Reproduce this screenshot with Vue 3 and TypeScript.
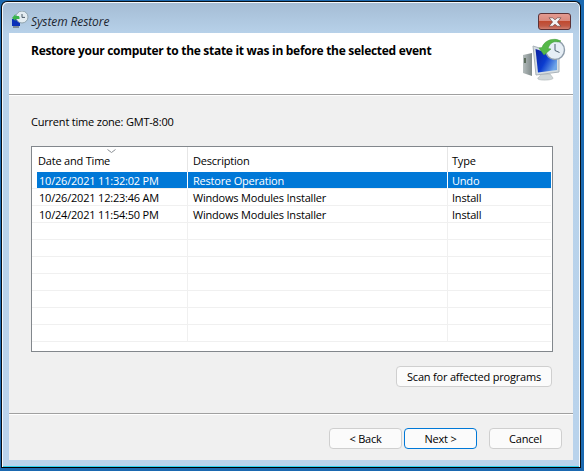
<script setup lang="ts">
const columns = ['Date and Time', 'Description', 'Type']

const restorePoints = [
  { date: '10/26/2021 11:32:02 PM', description: 'Restore Operation', type: 'Undo' },
  { date: '10/26/2021 12:23:46 AM', description: 'Windows Modules Installer', type: 'Install' },
  { date: '10/24/2021 11:54:50 PM', description: 'Windows Modules Installer', type: 'Install' },
]

const emptyRows = 7
</script>

<template>
  <div class="desktop">
    <div class="window">
      <div class="titlebar">
        <svg class="title-icon" width="18" height="18" viewBox="0 0 18 18">
          <rect x="1" y="8" width="8" height="7" fill="#0a2fb8" />
          <rect x="2" y="15" width="6" height="2" fill="#7d8c98" />
          <circle cx="11" cy="6" r="6" fill="#e4edf2" stroke="#8fa3ad" />
          <path d="M11 3v3.4h3" fill="none" stroke="#4b5a66" />
          <path d="M1 7l3.5-4v2h2.5c1 0 1.5 .5 1.5 1.5v1.5h-4v2z" fill="#39b54a" />
        </svg>
        <span class="title-text">System Restore</span>
        <button class="close" type="button" aria-label="Close">
          <svg width="14" height="10" viewBox="0 0 14 10">
            <path d="M1 .8h3.6l2.4 2 2.4-2H13L9.4 5 13 9.2H9.4L7 7.2l-2.4 2H1L4.6 5z" fill="#f4f4f4" stroke="#5d3a3a" stroke-width=".6" />
          </svg>
        </button>
      </div>

      <div class="content">
        <header class="banner">
          <h1>Restore your computer to the state it was in before the selected event</h1>
          <svg class="banner-icon" width="46" height="46" viewBox="0 0 46 46">
            <defs>
              <linearGradient id="screen" x1="0" y1="0" x2="1" y2="0.6">
                <stop offset="0" stop-color="#0a1f9e" />
                <stop offset=".55" stop-color="#0b3ccf" />
                <stop offset="1" stop-color="#6fa6e8" />
              </linearGradient>
              <linearGradient id="tower" x1="0" y1="0" x2="1" y2="0">
                <stop offset="0" stop-color="#b4bcbc" />
                <stop offset="1" stop-color="#7f8a8a" />
              </linearGradient>
            </defs>
            <path d="M1 18l9-2v23l-9-3z" fill="url(#tower)" />
            <rect x="2" y="21" width="2" height="5" fill="#5b6b5b" />
            <path d="M20 37h8l3 4c1 2-12 3-15 1-1-1 2-3 4-5z" fill="#cfd6d8" stroke="#aab2b4" stroke-width=".6" />
            <path d="M11 9l26 8v18l-23 3z" fill="#d5dde2" stroke="#a9b2b8" />
            <path d="M13.500 12l21.500 7v14l-19 2.500z" fill="url(#screen)" />
            <circle cx="33" cy="13" r="9.500" fill="#e6eef5" stroke="#8d9caa" stroke-width="1.400" />
            <path d="M33 7v6.500l4.500 2" fill="none" stroke="#4f6070" stroke-width="1" />
            <path d="M22 18l-5-7 3-.5c2-6 8-9 15-8l4 1.500-3 1c-5-1-8 1-10 6.500l3 .5z" fill="#55b848" stroke="#3f9a38" stroke-width=".5" />
          </svg>
        </header>

        <main class="panel">
          <p class="timezone">Current time zone: GMT-8:00</p>

          <div class="list">
            <div class="row head">
              <span v-for="col in columns" :key="col" class="cell">{{ col }}</span>
              <svg class="sort" width="9" height="4" viewBox="0 0 9 4">
                <path d="M.5 .5l4 3 4-3" fill="none" stroke="#8a8f94" />
              </svg>
            </div>
            <div
              v-for="(point, i) in restorePoints"
              :key="point.date"
              class="row item"
              :class="{ selected: i === 0 }"
            >
              <span class="cell">{{ point.date }}</span>
              <span class="cell">{{ point.description }}</span>
              <span class="cell">{{ point.type }}</span>
            </div>
            <div v-for="n in emptyRows" :key="n" class="row item">
              <span class="cell"></span>
              <span class="cell"></span>
              <span class="cell"></span>
            </div>
          </div>

          <div class="scan-row">
            <button class="btn scan" type="button">Scan for affected programs</button>
          </div>
        </main>

        <footer class="footer">
          <button class="btn" type="button">&lt; Back</button>
          <button class="btn primary" type="button">Next &gt;</button>
          <button class="btn cancel" type="button">Cancel</button>
        </footer>
      </div>
    </div>
  </div>
</template>

<style>
html,
body {
  margin: 0;
  background: #1b69b0;
}
</style>

<style scoped>
.desktop {
  box-sizing: border-box;
  width: 584px;
  height: 471px;
  padding: 1px 3px 3px 1px;
  background: #1b69b0;
  font-family: "Open Sans", "Noto Sans", sans-serif;
  font-size: 11px;
  letter-spacing: -0.2px;
  color: #000;
  overflow: hidden;
}

.window {
  box-sizing: border-box;
  height: 100%;
  display: flex;
  flex-direction: column;
  padding: 0 7px 7px 7px;
  border: 1px solid #0a0f14;
  border-bottom-color: #000;
  border-radius: 6px 6px 0 0;
  background: linear-gradient(#a4bcd4 0, #b8d2ea 33px, #b9d3ec 100%);
  box-shadow: inset 1px 1px 0 #f4f8fc, inset -1px 0 0 #f4f8fc, inset 0 -1px 0 #2fd0ee;
}

.titlebar {
  flex: 0 0 31px;
  display: flex;
  align-items: center;
  position: relative;
  padding-left: 2px;
}

.title-icon {
  margin-top: 5px;
  margin-right: 1px;
}

.title-text {
  margin-top: 8px;
  margin-left: 1px;
  font-style: italic;
  font-size: 12px;
  letter-spacing: -0.1px;
  color: #1c2630;
}

.close {
  position: absolute;
  right: 2px;
  top: 11px;
  width: 33px;
  height: 17px;
  padding: 0;
  display: flex;
  align-items: center;
  justify-content: center;
  border: 1px solid #5c3236;
  border-radius: 3px;
  background: linear-gradient(#e49a90 0, #d98a7e 45%, #c04a30 50%, #c05a46 80%, #d08070 100%);
}

.content {
  flex: 1;
  display: flex;
  flex-direction: column;
  background: #f0f0f0;
  min-height: 0;
}

.banner {
  box-sizing: border-box;
  height: 62px;
  display: flex;
  justify-content: space-between;
  align-items: flex-start;
  padding: 9px 5px 0 22px;
  background: #fff;
  border-bottom: 1px solid #a0a0a0;
}

h1 {
  margin: 0;
  font-size: 12px;
  font-weight: 700;
  line-height: 17px;
  letter-spacing: -0.29px;
}

.banner-icon {
  margin-top: -5px;
}

.panel {
  flex: 1;
  padding: 0 20px 0 22px;
  border-top: 1px solid #fff;
}

.timezone {
  margin: 17px 0 0;
  line-height: 17px;
}

.list {
  box-sizing: border-box;
  height: 206px;
  margin-top: 16px;
  padding-right: 1px;
  border: 1px solid #82878c;
  background: #fff;
  overflow: hidden;
}

.row {
  position: relative;
  display: grid;
  grid-template-columns: 156px 260px 1fr;
}

.head {
  height: 25px;
  line-height: 28px;
}

.head .cell {
  padding-left: 6px;
  border-right: 1px solid #e6e6e6;
}

.head .cell:nth-of-type(2) {
  padding-left: 5px;
}

.head .cell:last-of-type {
  border-right: 0;
  padding-left: 4px;
}

.sort {
  position: absolute;
  left: 75px;
  top: 2px;
}

.item {
  height: 17px;
  line-height: 17px;
  box-sizing: border-box;
}

.item .cell {
  height: 16px;
  padding-left: 2px;
  margin-left: 0;
  border-right: 1px solid #f0f0f0;
  border-bottom: 1px solid #f0f0f0;
  white-space: nowrap;
  box-sizing: content-box;
}

.item .cell:first-child {
  padding-left: 7px;
}

.item .cell:nth-child(2) {
  padding-left: 5px;
}

.item .cell:last-child {
  padding-left: 4px;
  border-right: 0;
}

.selected .cell {
  color: #fff;
  background: #0078d7;
  border-right-color: #fff;
  background-clip: padding-box;
}

.selected .cell:first-child {
  background: linear-gradient(90deg, #fff 5px, #0078d7 5px);
}

.scan-row {
  display: flex;
  justify-content: flex-end;
  margin-top: 14px;
  padding-right: 1px;
}

.btn {
  box-sizing: border-box;
  width: 73px;
  height: 21px;
  padding: 0;
  font: inherit;
  letter-spacing: inherit;
  line-height: 17px;
  color: #000;
  background: #fbfbfb;
  border: 1px solid #cfcfcf;
  border-radius: 4px;
}

.scan {
  width: 156px;
}

.footer {
  box-sizing: border-box;
  height: 47px;
  display: flex;
  justify-content: flex-end;
  gap: 2px;
  padding: 14px 11px 0 0;
  border-top: 1px solid #a0a0a0;
  box-shadow: inset 0 1px 0 #fff;
}

.primary {
  border-color: #0078d7;
}

.cancel {
  margin-left: 10px;
}
</style>
